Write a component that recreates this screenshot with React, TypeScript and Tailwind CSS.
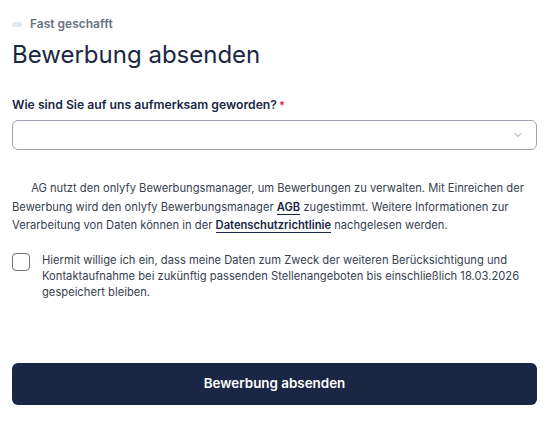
import { ChevronDown } from "lucide-react";

export default function App() {
  return (
    <div className="w-[550px] h-[424px] bg-white px-3 pt-4 font-['Inter',sans-serif] text-[#1a2744]">
      {/* Step indicator */}
      <div className="flex items-center gap-2 text-xs font-semibold text-[#6b7280]">
        <span className="h-[5px] w-[10px] rounded-full bg-[#e2e8f0]" />
        Fast geschafft
      </div>
      <h1 className="mt-[7px] text-2xl leading-8 text-[#1a2744]">Bewerbung absenden</h1>

      {/* Source select */}
      <label className="mt-[24px] block text-[12.2px] font-semibold leading-5 text-[#1a2744]">
        Wie sind Sie auf uns aufmerksam geworden?
        <span className="ml-0.5 align-top text-[11px] text-[#e11d48]">*</span>
      </label>
      <div className="mt-[5px] flex h-[30px] w-[525px] items-center justify-end rounded-md border border-[#9ca3af] pr-3">
        <ChevronDown className="h-3 w-3 text-[#6b7280]" strokeWidth={1.5} />
      </div>

      {/* Info text */}
      <p className="mt-[29px] text-[11.2px] leading-[18.5px] text-[#374151]">
        <span className="pl-4">&nbsp;</span>AG nutzt den onlyfy Bewerbungsmanager, um Bewerbungen zu verwalten. Mit Einreichen der
        <br />
        Bewerbung wird den onlyfy Bewerbungsmanager{" "}
        <span className="border-b border-[#1a2744] font-semibold text-[#1a2744]">AGB</span> zugestimmt. Weitere Informationen zur
        <br />
        Verarbeitung von Daten können in der{" "}
        <span className="border-b border-[#1a2744] font-semibold text-[#1a2744]">Datenschutzrichtlinie</span> nachgelesen werden.
      </p>

      {/* Consent */}
      <div className="mt-[18px] flex gap-3">
        <span className="h-[18px] w-[18px] shrink-0 rounded border border-[#6b7280]" />
        <p className="-mt-[1px] text-[11.2px] leading-4 text-[#374151]">
          Hiermit willige ich ein, dass meine Daten zum Zweck der weiteren Berücksichtigung und
          <br />
          Kontaktaufnahme bei zukünftig passenden Stellenangeboten bis einschließlich 18.03.2026
          <br />
          gespeichert bleiben.
        </p>
      </div>

      <button className="mt-[63px] flex h-[42px] w-[525px] items-center justify-center rounded-md bg-[#1a2744] text-[13.4px] font-semibold text-white">
        Bewerbung absenden
      </button>
    </div>
  );
}
